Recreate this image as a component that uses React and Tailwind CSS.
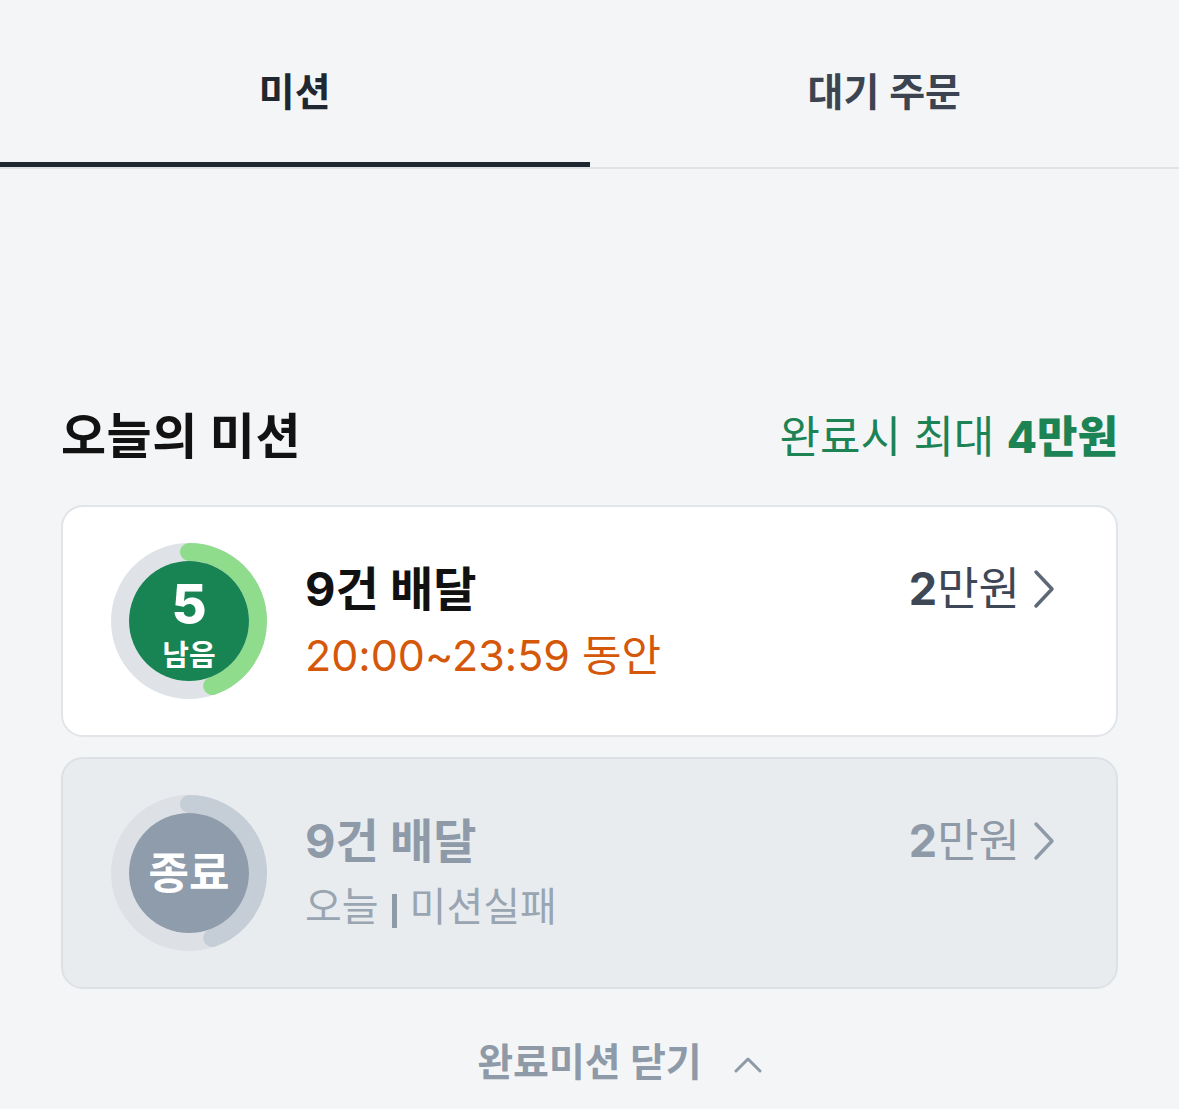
import { useState } from 'react'

const font = { fontFamily: '"Inter", "Noto Sans CJK KR", sans-serif' }

function Ring({ done, total, track, arc, fill, children }) {
  const r = 69
  const c = 2 * Math.PI * r
  const len = (done / total) * c
  return (
    <div className="relative w-[156px] h-[156px] shrink-0">
      <svg width="156" height="156" viewBox="0 0 156 156" className="absolute inset-0">
        <circle cx="78" cy="78" r={r} fill="none" stroke={track} strokeWidth="18" />
        <circle
          cx="78"
          cy="78"
          r={r}
          fill="none"
          stroke={arc}
          strokeWidth="18"
          strokeLinecap="round"
          strokeDasharray={`${len} ${c}`}
          transform="rotate(-90 78 78)"
        />
        <circle cx="78" cy="78" r="60" fill={fill} />
      </svg>
      <div className="absolute inset-0 flex flex-col items-center justify-center text-white">{children}</div>
    </div>
  )
}

function ChevronRight({ color }) {
  return (
    <svg width="24" height="40" viewBox="0 0 24 40" fill="none">
      <path d="M4 3 L20 20 L4 37" stroke={color} strokeWidth="3.5" strokeLinecap="round" strokeLinejoin="round" />
    </svg>
  )
}

export default function App() {
  const [tab, setTab] = useState('mission')
  const tabs = [
    { id: 'mission', label: '미션' },
    { id: 'waiting', label: '대기 주문' },
  ]

  return (
    <div className="min-h-[1109px] bg-[#f4f5f7]" style={font}>
      {/* Tabs */}
      <div className="flex border-b-2 border-[#dfe2e6]">
        {tabs.map(t => (
          <button
            key={t.id}
            onClick={() => setTab(t.id)}
            className={`w-1/2 h-[167px] pt-[22px] flex items-center justify-center text-[39px] border-b-[5px] ${
              tab === t.id
                ? 'border-[#1f2730] text-[#1f2730] font-bold'
                : 'border-transparent text-[#3c4451] font-semibold'
            }`}
          >
            {t.label}
          </button>
        ))}
      </div>

      <div className="px-[61px]">
        {/* Header */}
        <div className="mt-[240px] flex items-center justify-between">
          <h2 className="text-[49px] tracking-[0.5px] font-bold text-[#121212] leading-[56px]">오늘의 미션</h2>
          <p className="text-[44px] text-[#1b8354] leading-[56px]">
            완료시 최대 <span className="font-extrabold">4만원</span>
          </p>
        </div>

        {/* Active mission */}
        <div className="mt-[40px] h-[232px] rounded-[22px] border-2 border-[#e1e4e8] bg-white flex items-center pl-[48px] pr-[60px]">
          <Ring done={4} total={9} track="#dfe2e7" arc="#8fdc8c" fill="#188353">
            <span className="text-[54px] font-extrabold leading-none mt-[4px]">5</span>
            <span className="text-[29px] font-semibold leading-none mt-[10px]">남음</span>
          </Ring>
          <div className="ml-[38px] flex-1">
            <div className="text-[47px] font-bold text-[#111] leading-[56px]">9건 배달</div>
            <div className="text-[43px] text-[#d4570a] leading-[52px] mt-[12px]">20:00~23:59 동안</div>
          </div>
          <div className="self-start mt-[48px] flex items-center gap-[12px] text-[45px] text-[#3e4755]">
            <span>
              <span className="font-bold">2</span>만원
            </span>
            <ChevronRight color="#5e6978" />
          </div>
        </div>

        {/* Finished mission */}
        <div className="mt-[20px] h-[232px] rounded-[22px] border-2 border-[#dde1e5] bg-[#e9ecef] flex items-center pl-[48px] pr-[60px]">
          <Ring done={4} total={9} track="#dde1e6" arc="#c5cdd6" fill="#8f9cab">
            <span className="text-[44px] font-bold leading-none">종료</span>
          </Ring>
          <div className="ml-[38px] flex-1">
            <div className="text-[47px] font-bold text-[#8f9aa8] leading-[56px]">9건 배달</div>
            <div className="text-[40px] text-[#9aa5b2] leading-[52px] mt-[12px] flex items-center">
              오늘 <span className="mx-[13px] inline-block w-[5px] h-[34px] bg-[#8f9aa8] mt-[8px]" /> 미션실패
            </div>
          </div>
          <div className="self-start mt-[48px] flex items-center gap-[12px] text-[45px] text-[#8f9aa8]">
            <span>
              <span className="font-bold">2</span>만원
            </span>
            <ChevronRight color="#8f9aa8" />
          </div>
        </div>

        {/* Collapse */}
        <button className="mt-[44px] w-full flex items-center justify-center text-[39px] font-bold text-[#8e9aa8]">
          <span className="relative">
            완료미션 닫기
            <svg width="28" height="18" viewBox="0 0 28 18" fill="none" className="absolute left-[calc(100%+32px)] top-1/2 -translate-y-1/2 mt-[2px]">
              <path d="M2 16 L14 4 L26 16" stroke="#8e9aa8" strokeWidth="3" strokeLinecap="round" strokeLinejoin="round" />
            </svg>
          </span>
        </button>
      </div>
    </div>
  )
}
